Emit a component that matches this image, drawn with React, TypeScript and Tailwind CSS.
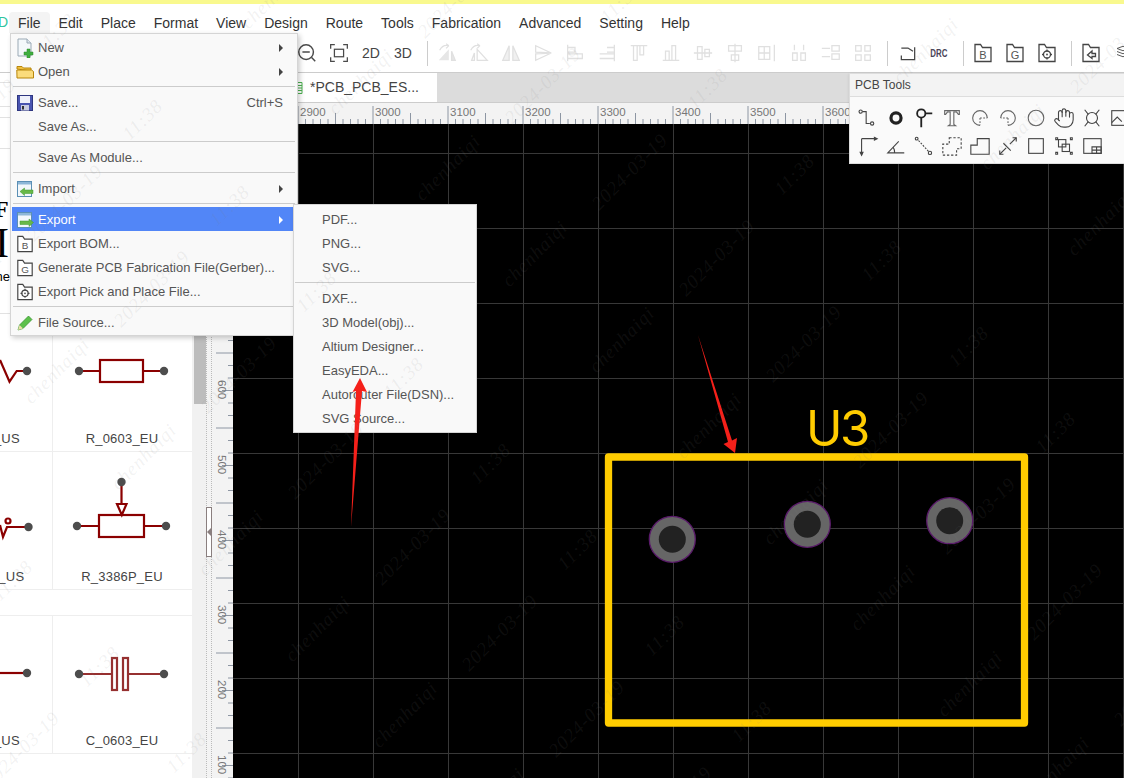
import { Hand } from "lucide-react";
import type { ReactNode } from "react";

const topMenus = ["Edit", "Place", "Format", "View", "Design", "Route", "Tools", "Fabrication", "Advanced", "Setting", "Help"];

// small toolbar glyph wrapper
const Ico = ({ children, size = 24, color = "#444", sw = 1.2 }: { children: ReactNode; size?: number; color?: string; sw?: number }) => (
  <svg width={size} height={size} viewBox="0 0 24 24" fill="none" stroke={color} strokeWidth={sw}>
    {children}
  </svg>
);

const FolderIcon = ({ letter, size = 20, children }: { letter?: string; size?: number; children?: ReactNode }) => (
  <svg width={size} height={size} viewBox="0 0 20 20" fill="#fff" stroke="#444" strokeWidth="1.300">
    <path d="M2 1.500h5.500l2 3H18v14H2z" />
    {letter && (
      <text x="10" y="15.500" textAnchor="middle" fontSize="11" fill="#555" stroke="none" fontFamily="Liberation Sans">
        {letter}
      </text>
    )}
    {children}
  </svg>
);

const PickGlyph = () => (
  <>
    <circle cx="10" cy="11.500" r="3.500" fill="none" />
    <circle cx="10" cy="11.500" r="1" fill="#555" stroke="none" />
    <path d="M10 6.500v2M10 14.500v2M5 11.500h2M13 11.500h2" fill="none" />
  </>
);

const NewIcon = () => (
  <svg width="18" height="20" viewBox="0 0 18 20">
    <path d="M2 1h9l4 4v13H2z" fill="#f4f8fb" stroke="#9aa9b5" />
    <path d="M11 1v4h4" fill="#dde6ee" stroke="#9aa9b5" />
    <path d="M11 11h3v3h3v3h-3v3h-3v-3H8v-3h3z" fill="#3fae3f" stroke="#2c8a2c" strokeWidth=".5" />
  </svg>
);

const OpenIcon = () => (
  <svg width="18" height="16" viewBox="0 0 18 16">
    <path d="M1 5V2.500h5l1.500 1.500H15V7z" fill="#f0c040" stroke="#b8860b" />
    <path d="M.800 6h14.700l2 1.500v6.500H1z" fill="#fbdc7c" stroke="#b8860b" />
  </svg>
);

const SaveIcon = () => (
  <svg width="16" height="16" viewBox="0 0 16 16">
    <rect x=".500" y=".500" width="15" height="15" fill="#4a55b0" stroke="#2e3680" />
    <rect x="3" y="1" width="10" height="7" fill="#eef0fa" />
    <rect x="4" y="10" width="8" height="5.500" fill="#c9cce0" />
    <rect x="5" y="11" width="2" height="3.500" fill="#333" />
  </svg>
);

const WindowArrow = ({ dir }: { dir: "in" | "out" }) => (
  <svg width="17" height="17" viewBox="0 0 17 17">
    <rect x=".500" y=".500" width="14" height="15" fill="#f2f7fb" stroke="#5b8fb5" />
    <rect x="1" y="1" width="13" height="2.500" fill="#8db7d8" />
    {dir === "in" ? (
      <path d="M3 10.500 7.500 7v2H16v3.500H7.500v2z" fill="#68b848" stroke="#3f9a2c" strokeWidth=".5" />
    ) : (
      <path d="M16.500 10.500 12 7v2H3v3.500h9v2z" fill="#68b848" stroke="#3f9a2c" strokeWidth=".5" />
    )}
  </svg>
);

const PencilIcon = () => (
  <svg width="16" height="16" viewBox="0 0 16 16">
    <path d="M1 15 2.500 10 11.500 1 15 4.500 6 13.500z" fill="#5cc04a" stroke="#2f8f2a" strokeWidth=".7" />
    <path d="M1 15 2.500 10 6 13.500z" fill="#eadfa8" />
  </svg>
);

const Triangle = ({ white }: { white?: boolean }) => (
  <span className={`h-0 w-0 border-y-[4px] border-l-[4px] border-y-transparent ${white ? "border-l-white" : "border-l-[#444]"}`} />
);

const MenuItem = ({ icon, label, hint, sub, active }: { icon?: ReactNode; label: string; hint?: string; sub?: boolean; active?: boolean }) => (
  <div className={`flex h-6 items-center pt-[2px] text-[13px] ${active ? "bg-[#5286f7] text-white" : "text-[#555]"}`}>
    <span className="flex w-[26px] shrink-0 justify-center">{icon}</span>
    <span className="flex-1 whitespace-nowrap">{label}</span>
    {hint && <span className="pr-[13px]">{hint}</span>}
    {sub && (
      <span className="flex w-[17px] justify-start pr-3">
        <Triangle white={active} />
      </span>
    )}
  </div>
);

const Sep = () => <div className="mx-[1px] my-[3px] h-px bg-[#ccc]" />;

const SubItem = ({ label }: { label: string }) => (
  <div className="flex h-6 items-center whitespace-nowrap pl-[28px] pt-[2px] text-[13px] text-[#555]">{label}</div>
);

const disabledIcons: ReactNode[] = [
  <>
    <path d="M14 8v12H3z" fill="#e6e6e6" stroke="none" />
    <path d="M4 9c2-4 6-6 10-5l-3-2M14 4l-3 3" />
    <path d="M17 10l4 10h-4z" fill="#e6e6e6" />
  </>,
  <>
    <path d="M10 8v12h11z" fill="#fff" />
    <path d="M3 9c2-4 6-6 10-5l-3-2M13 4l-3 3M4 20l3-8v8z" />
  </>,
  <path d="M10 4v16H3zM14 4v16h7z" fill="#f0f0f0" />,
  <path d="M4 4v7l17 1zM4 20v-7l17-1z" />,
  <path d="M4 3v18M4 6h8v5H4M4 13h16v5H4" />,
  <path d="M20 3v18M4 13h16v5H4M12 6h8v5h-8" />,
  <path d="M3 4h18M6 4v16h4V4M13 4v10h4V4" />,
  <path d="M3 20h18M6 20V10h4v10M13 20V4h4v16" />,
  <path d="M2 12h20M6 5h5v14H6zM14 8h5v8h-5z" fill="#fff" />,
  <path d="M12 2v20M5 4h14v6H5zM8 14h8v6H8z" fill="#fff" />,
  <path d="M3 5h12v14H3zM9 5v14M3 12h12M20 3v18" />,
  <path d="M5 12h5v8H5zM14 12h5v8h-5zM7 3v6M17 3v6" />,
  <path d="M2 7h9M2 16h9M13 4h8v6h-8zM13 13h8v6h-8z" />,
  <path d="M4 4h6v6H4zM14 4h6v6h-6zM4 14h6v6H4zM14 14h6v6h-6z" />,
];

// PCB Tools panel, two rows of drawing tools
const toolIconsA: ReactNode[] = [
  <>
    <circle cx="4" cy="5" r="1.800" />
    <path d="M6 5h4v13h4" />
    <circle cx="16.500" cy="18" r="1.800" />
  </>,
  <circle cx="12" cy="12" r="5.500" strokeWidth="3.500" stroke="#222" />,
  <>
    <circle cx="9" cy="7" r="4.500" strokeWidth="2" stroke="#222" />
    <path d="M9 12v10M13.500 7H21" strokeWidth="2" stroke="#222" />
  </>,
  <path d="M4 8V4h16v4h-1l-2-2.500h-3V19l2 1.500H8L10 19V5.500H7L5 8z" stroke="#666" />,
  <>
    <path d="M20 12A8 8 0 1 0 12 20" stroke="#666" />
    <path d="M12 12h8M12 12v8" strokeDasharray="2 1.500" stroke="#666" />
  </>,
  <>
    <path d="M12 20A8 8 0 1 0 4 12" stroke="#666" />
    <path d="M12 12v8M12 12H4" strokeDasharray="2 1.500" stroke="#666" />
  </>,
  <circle cx="12" cy="12" r="8.500" stroke="#666" />,
  null,
  <>
    <circle cx="12" cy="12" r="6" />
    <path d="M4 3l4 5M20 3l-4 5M4 21l4-5M20 21l-4-5" />
  </>,
  <>
    <rect x="3" y="4" width="20" height="16" />
    <path d="M3 17l6-6 5 5" />
  </>,
];

const toolIconsB: ReactNode[] = [
  <>
    <path d="M5 4h16M5 4v18" />
    <path d="M22 4l-3-1.500v3zM5 22l-1.500-3h3z" fill="#444" />
  </>,
  <path d="M21 19.500H3L15 7M9 13.500c1 1.500 1.500 3.500 1.500 6" />,
  <>
    <circle cx="4" cy="4" r="1.500" />
    <path d="M6 6l11 12" strokeDasharray="2 1.500" />
    <circle cx="18.500" cy="19.500" r="1.800" />
  </>,
  <path d="M9 3h13v12h-5v7H2V10h7z" strokeDasharray="2.500 2" />,
  <path d="M2 21V11h7V4h13v17z" />,
  <>
    <path d="M3 21l7-7M14 10l7-7M7 9l8 8" />
    <path d="M3 17v4h4M17 3h4v4" />
  </>,
  <rect x="4" y="4" width="16" height="16" />,
  <>
    <rect x="6" y="5" width="8" height="8" />
    <rect x="10" y="10" width="8" height="8" />
    <path d="M3 3h2v2H3zM19 3h2v2h-2zM3 19h2v2H3zM19 19h2v2h-2z" />
  </>,
  <>
    <rect x="3" y="4" width="19" height="16" />
    <path d="M12 13h10v7H12zM12 16.500h10M17 13v7" />
  </>,
];

const ToolCell = ({ children }: { children: ReactNode }) => (
  <div className="flex h-7 w-7 shrink-0 items-center justify-center">{children}</div>
);

const BarCell = ({ children }: { children: ReactNode }) => (
  <div className="flex h-8 w-8 shrink-0 items-center justify-center">{children}</div>
);

const BarSep = () => <div className="h-[25px] w-px shrink-0 bg-[#ccc]" />;

const Pin = ({ cx, cy }: { cx: number; cy: number }) => <circle cx={cx} cy={cy} r="4.200" fill="#4d4d4d" stroke="none" />;

// each cell is 138 wide; the y numbers are measured from the top of the row
const ComponentCell = ({ label, children, border = true }: { label: string; children: ReactNode; border?: boolean }) => (
  <div className={`flex h-[138px] w-[138px] shrink-0 flex-col items-center ${border ? "border-r border-[#eee]" : ""}`}>
    <svg width="138" height="115" viewBox="0 0 138 115" fill="none" stroke="#8b0000" strokeWidth="2.200" className="shrink-0">
      {children}
    </svg>
    <span className="text-[13px] leading-[20px] tracking-[.2px] text-[#444]">{label}</span>
  </div>
);

const ComponentRow = ({ children }: { children: ReactNode }) => (
  <div className="-ml-[85px] flex h-[138px] w-[277px] shrink-0 border-b border-[#eee]">{children}</div>
);

const TopRuler = () => {
  const ticks = [];
  for (let i = -10; i < 120; i++) {
    const x = 86 + i * 7.5;
    const h = i % 10 === 0 ? 18 : i % 5 === 0 ? 11 : 5;
    ticks.push(<line key={i} x1={x} x2={x} y1={21 - h} y2={21} stroke="#8d96a3" />);
  }
  const labels = [];
  for (let i = 0; i < 11; i++) {
    labels.push(
      <text key={i} x={88 + i * 75} y={13} fontSize="11.500" fill="#777" fontFamily="Liberation Sans">
        {2900 + i * 100}
      </text>
    );
  }
  return (
    <svg width="912" height="21" className="block">
      {ticks}
      {labels}
    </svg>
  );
};

const LeftRuler = () => {
  const ticks = [];
  for (let i = 0; i < 60; i++) {
    const y = 4 + i * 12.5;
    const h = i % 6 === 0 ? 17 : i % 3 === 0 ? 11 : 5;
    ticks.push(<line key={i} x1={21 - h} x2={21} y1={y} y2={y} stroke="#8d96a3" />);
  }
  const labels = [];
  for (let i = 0; i < 6; i++) {
    const y = 256 + i * 75;
    labels.push(
      <text key={i} x={0} y={0} transform={`translate(6 ${y}) rotate(90)`} fontSize="11.500" fill="#777" fontFamily="Liberation Sans">
        {600 - i * 100}
      </text>
    );
  }
  return (
    <svg width="21" height="654" className="block">
      {ticks}
      {labels}
    </svg>
  );
};

const watermarkBase = [
  { text: "chenhaiqi", x: 448, y: 168 },
  { text: "2024-03-19", x: 630, y: 172 },
  { text: "11:38", x: 795, y: 175 },
];

const Watermarks = () => {
  const marks: { text: string; x: number; y: number }[] = [];
  for (const b of watermarkBase) {
    for (let i = -12; i < 12; i++) {
      for (let j = -3; j < 4; j++) {
        const x = b.x + 87 * i + 652 * j;
        const y = b.y + 86 * i + 55 * j;
        if (x > -60 && x < 1180 && y > -30 && y < 810) marks.push({ text: b.text, x, y });
      }
    }
  }
  return (
    <div className="pointer-events-none absolute inset-0 overflow-hidden">
      {marks.map((m, i) => (
        <span
          key={i}
          className="absolute -translate-x-1/2 -translate-y-1/2 -rotate-[45deg] whitespace-nowrap font-['Liberation_Serif'] text-[19px] italic tracking-[1px] text-[#8080801c]"
          style={{ left: m.x, top: m.y }}
        >
          {m.text}
        </span>
      ))}
    </div>
  );
};

export default function App() {
  return (
    <div className="relative flex h-[778px] w-[1124px] flex-col overflow-hidden bg-white font-['Liberation_Sans',sans-serif]">
      <div className="h-1 shrink-0 bg-[#f9f98e]" />

      {/* menu bar */}
      <div className="flex h-[30px] shrink-0 items-start overflow-hidden">
        <span className="-ml-[2px] mt-[11px] w-[11px] text-[14px] leading-none text-[#2fc4a0]">D</span>
        <div className="mt-[8px] flex h-[21px] items-center rounded-t-sm bg-[#f4f4f4] px-[9px] pt-[2px] text-[14px] text-[#333]">File</div>
        {topMenus.map((m) => (
          <div key={m} className="mt-[8px] flex h-[21px] items-center px-[9px] pt-[2px] text-[14px] text-[#333] first:pl-[9.5px]">
            {m}
          </div>
        ))}
      </div>

      {/* toolbar */}
      <div className="flex h-[38px] shrink-0 items-center overflow-hidden pl-[291px]">
        <BarCell>
          <Ico size={22} sw={1.6} color="#4a4a4a">
            <circle cx="11" cy="11" r="8" />
            <path d="M7 11h8M17 17l4 4" />
          </Ico>
        </BarCell>
        <BarCell>
          <Ico size={20} sw={1.5} color="#4a4a4a">
            <path d="M2 7V2h5M17 2h5v5M22 17v5h-5M7 22H2v-5" />
            <rect x="6.500" y="7.500" width="11" height="9" />
          </Ico>
        </BarCell>
        <div className="flex h-8 w-8 shrink-0 items-center justify-center text-[14px] text-[#444]">2D</div>
        <div className="flex h-8 w-8 shrink-0 items-center justify-center text-[14px] text-[#444]">3D</div>
        <div className="w-[8px] shrink-0" />
        <BarSep />
        <div className="w-[3px] shrink-0" />
        {disabledIcons.map((g, i) => (
          <BarCell key={i}>
            <Ico size={22} sw={1.4} color="#e0e0e0">
              {g}
            </Ico>
          </BarCell>
        ))}
        <div className="w-[8px] shrink-0" />
        <BarSep />
        <div className="w-[4px] shrink-0" />
        <BarCell>
          <Ico size={20} sw={1.5} color="#444">
            <path d="M4 6h8l6 4M20 5v15H4v-5" />
          </Ico>
        </BarCell>
        <div className="flex h-8 w-[30px] shrink-0 items-center justify-center">
          <span className="scale-x-[0.72] text-[11px] font-bold text-[#4a4458]">DRC</span>
        </div>
        <div className="w-[9px] shrink-0" />
        <BarSep />
        <div className="w-[3px] shrink-0" />
        <BarCell>
          <FolderIcon letter="B" />
        </BarCell>
        <BarCell>
          <FolderIcon letter="G" />
        </BarCell>
        <BarCell>
          <FolderIcon>
            <PickGlyph />
          </FolderIcon>
        </BarCell>
        <div className="w-[8px] shrink-0" />
        <BarSep />
        <div className="w-[3px] shrink-0" />
        <BarCell>
          <FolderIcon>
            <path d="M11 8 6.500 12l4.500 3.500V13.500h3.500V10.500H11z" fill="none" />
          </FolderIcon>
        </BarCell>
        <BarCell>
          <Ico size={18} sw={1.3} color="#555">
            <path d="M4 6l8-3 8 3-8 3zM4 10l8 3 8-3M4 14l8 3 8-3" />
          </Ico>
        </BarCell>
      </div>

      {/* main area */}
      <div className="flex min-h-0 flex-1 border-t border-[#ccc]">
        {/* left library panel */}
        <div className="flex w-[192px] shrink-0 flex-col overflow-hidden">
          <div className="h-[10px] shrink-0 border-b border-[#e2e2e2]" />
          <div className="h-[24px] shrink-0 border-b border-[#e2e2e2]" />
          <div className="h-[11px] shrink-0 border-b border-[#e2e2e2]" />
          <div className="h-[31px] shrink-0 border-b border-[#e2e2e2]" />
          <div className="h-[165px] shrink-0 overflow-hidden border-b border-[#e2e2e2] font-['Liberation_Serif'] text-black">
            <div className="-ml-[6px] mt-[50px] h-[20px] text-[24px] font-bold leading-[20px]">F</div>
            <div className="-ml-[5px] mt-[6px] h-[36px] text-[42px] leading-[36px]">I</div>
            <div className="-ml-[16px] mt-[8px] font-['Liberation_Sans'] text-[13px] leading-[16px]">Pine</div>
          </div>
          <ComponentRow>
            <ComponentCell label="R_0603_US">
              <path d="M85 46 94.500 67.700 101.700 57H112" />
              <Pin cx={112} cy={57} />
            </ComponentCell>
            <ComponentCell label="R_0603_EU" border={false}>
              <path d="M26 57h21M90 57h21" />
              <rect x="47" y="46" width="43" height="22" />
              <Pin cx={26} cy={57} />
              <Pin cx={111} cy={57} />
            </ComponentCell>
          </ComponentRow>
          <ComponentRow>
            <ComponentCell label="R_3386P_US">
              <circle cx="93" cy="69" r="2.500" />
              <path d="M85 73 88 85 92 75H113.500" />
              <Pin cx={113.500} cy={75} />
            </ComponentCell>
            <ComponentCell label="R_3386P_EU" border={false}>
              <path d="M24 74h22M91 74h22M68.500 30v23" />
              <path d="M64 52h9.500l-4.700 11z" />
              <rect x="46" y="63" width="45" height="22" />
              <Pin cx={24} cy={74} />
              <Pin cx={113} cy={74} />
              <Pin cx={68.500} cy={30} />
            </ComponentCell>
          </ComponentRow>
          <div className="h-[26px] shrink-0 border-b border-[#eee]" />
          <ComponentRow>
            <ComponentCell label="C_0603_US">
              <path d="M85 57h27" />
              <Pin cx={112} cy={57} />
            </ComponentCell>
            <ComponentCell label="C_0603_EU" border={false}>
              <g stroke="#963030">
                <path d="M26 58h33M75 58h36" />
                <rect x="59" y="42" width="5" height="32" fill="#fff" />
                <rect x="70" y="42" width="5" height="32" fill="#fff" />
              </g>
              <Pin cx={26} cy={58} />
              <Pin cx={111} cy={58} />
            </ComponentCell>
          </ComponentRow>
        </div>

        {/* scrollbar */}
        <div className="w-[14px] shrink-0 bg-[#f1f1f1] pl-[2px]">
          <div className="h-[331px] bg-[#bdbdbd]" />
        </div>

        {/* splitter */}
        <div className="w-[6px] shrink-0 border-x border-dotted border-[#bbb] bg-[#f3f3f3] pt-[434px]">
          <div className="relative -ml-px flex h-[50px] w-[6px] items-center border border-[#8a7f7f] bg-white">
            <span className="h-0 w-0 border-y-[4px] border-r-[4px] border-y-transparent border-r-[#8a7f7f]" />
          </div>
        </div>

        {/* editor */}
        <div className="flex min-w-0 flex-1 flex-col">
          <div className="flex h-[30px] shrink-0 border-b border-[#ccc] bg-[#dcdcdc]">
            <div className="flex w-[225px] items-center bg-white pl-[86px]">
              <svg width="5" height="12" viewBox="0 0 5 12" className="mr-[7px]">
                <path d="M0 .500h4v11H0M0 3.500h4M0 6h4M0 8.500h4" fill="none" stroke="#4cb050" />
              </svg>
              <span className="whitespace-nowrap text-[14px] text-[#444]">*PCB_PCB_ES...</span>
            </div>
          </div>
          <div className="h-[21px] shrink-0 overflow-hidden bg-[#f3f3f3]">
            <TopRuler />
          </div>
          <div className="flex min-h-0 flex-1">
            <div className="w-[21px] shrink-0 overflow-hidden bg-[#f3f3f3]">
              <LeftRuler />
            </div>
            <div className="min-w-0 flex-1 overflow-hidden bg-black bg-[linear-gradient(to_right,#383838_1px,transparent_1px),linear-gradient(to_bottom,#383838_1px,transparent_1px)] bg-[size:75px_75px] bg-[position:65px_29px]">
              <svg width="891" height="654" viewBox="233 124 891 654" className="block">
                <text x="806" y="446" fontSize="49" fill="#ffcc00" fontFamily="Inter" letterSpacing="-2.500">
                  U3
                </text>
                <rect x="608.500" y="457" width="416" height="266" fill="none" stroke="#ffcc00" strokeWidth="7.300" strokeLinejoin="round" />
                {[
                  [672.300, 539.300],
                  [807.300, 524.300],
                  [949.700, 520.700],
                ].map(([cx, cy]) => (
                  <g key={cx}>
                    <circle cx={cx} cy={cy} r="23" fill="#666" stroke="#5a1a6a" strokeWidth="1.300" />
                    <circle cx={cx} cy={cy} r="13.500" fill="#222" />
                  </g>
                ))}
              </svg>
            </div>
          </div>
        </div>
      </div>

      {/* PCB Tools floating panel */}
      <div className="absolute left-[849px] top-[73px] w-[300px] border border-[#ddd] bg-[#fafafa] shadow-sm">
        <div className="flex h-[23px] items-center border-b border-[#ddd] bg-[#f3f3f3] pl-[5px] text-[12px] text-[#444]">PCB Tools</div>
        <div className="flex flex-col pl-[4px] pt-[7px] pb-[3px]">
          <div className="flex">
            {toolIconsA.map((g, i) => (
              <ToolCell key={i}>
                {g ? <Ico size={22}>{g}</Ico> : <Hand size={22} strokeWidth={1.2} color="#444" />}
              </ToolCell>
            ))}
          </div>
          <div className="flex">
            {toolIconsB.map((g, i) => (
              <ToolCell key={i}>
                <Ico size={22}>{g}</Ico>
              </ToolCell>
            ))}
          </div>
        </div>
      </div>

      {/* File menu */}
      <div className="absolute left-[10px] top-[33px] w-[288px] border border-[#d5d5d5] bg-[#f9f9f9] p-px shadow-[2px_2px_5px_rgba(0,0,0,0.2)]">
        <MenuItem icon={<NewIcon />} label="New" sub />
        <MenuItem icon={<OpenIcon />} label="Open" sub />
        <Sep />
        <MenuItem icon={<SaveIcon />} label="Save..." hint="Ctrl+S" />
        <MenuItem label="Save As..." />
        <Sep />
        <MenuItem label="Save As Module..." />
        <Sep />
        <MenuItem icon={<WindowArrow dir="in" />} label="Import" sub />
        <Sep />
        <MenuItem icon={<WindowArrow dir="out" />} label="Export" sub active />
        <MenuItem icon={<FolderIcon letter="B" size={18} />} label="Export BOM..." />
        <MenuItem icon={<FolderIcon letter="G" size={18} />} label="Generate PCB Fabrication File(Gerber)..." />
        <MenuItem
          icon={
            <FolderIcon size={18}>
              <PickGlyph />
            </FolderIcon>
          }
          label="Export Pick and Place File..."
        />
        <Sep />
        <MenuItem icon={<PencilIcon />} label="File Source..." />
      </div>

      {/* Export submenu */}
      <div className="absolute left-[293px] top-[204px] w-[184px] border border-[#d5d5d5] bg-[#f9f9f9] py-[2px] shadow-[2px_2px_5px_rgba(0,0,0,0.2)]">
        <SubItem label="PDF..." />
        <SubItem label="PNG..." />
        <SubItem label="SVG..." />
        <Sep />
        <SubItem label="DXF..." />
        <SubItem label="3D Model(obj)..." />
        <SubItem label="Altium Designer..." />
        <SubItem label="EasyEDA..." />
        <SubItem label="Autorouter File(DSN)..." />
        <SubItem label="SVG Source..." />
      </div>

      {/* red annotation arrows */}
      <svg width="1124" height="778" className="pointer-events-none absolute left-0 top-0">
        <path d="M698 335 728 442 723.500 444 735 453 737 438 732 440.500z" fill="#f5201a" />
        <path d="M351 527 356 391 352.500 392 360 378 367 392 362 391z" fill="#f5201a" />
      </svg>

      <Watermarks />
    </div>
  );
}
